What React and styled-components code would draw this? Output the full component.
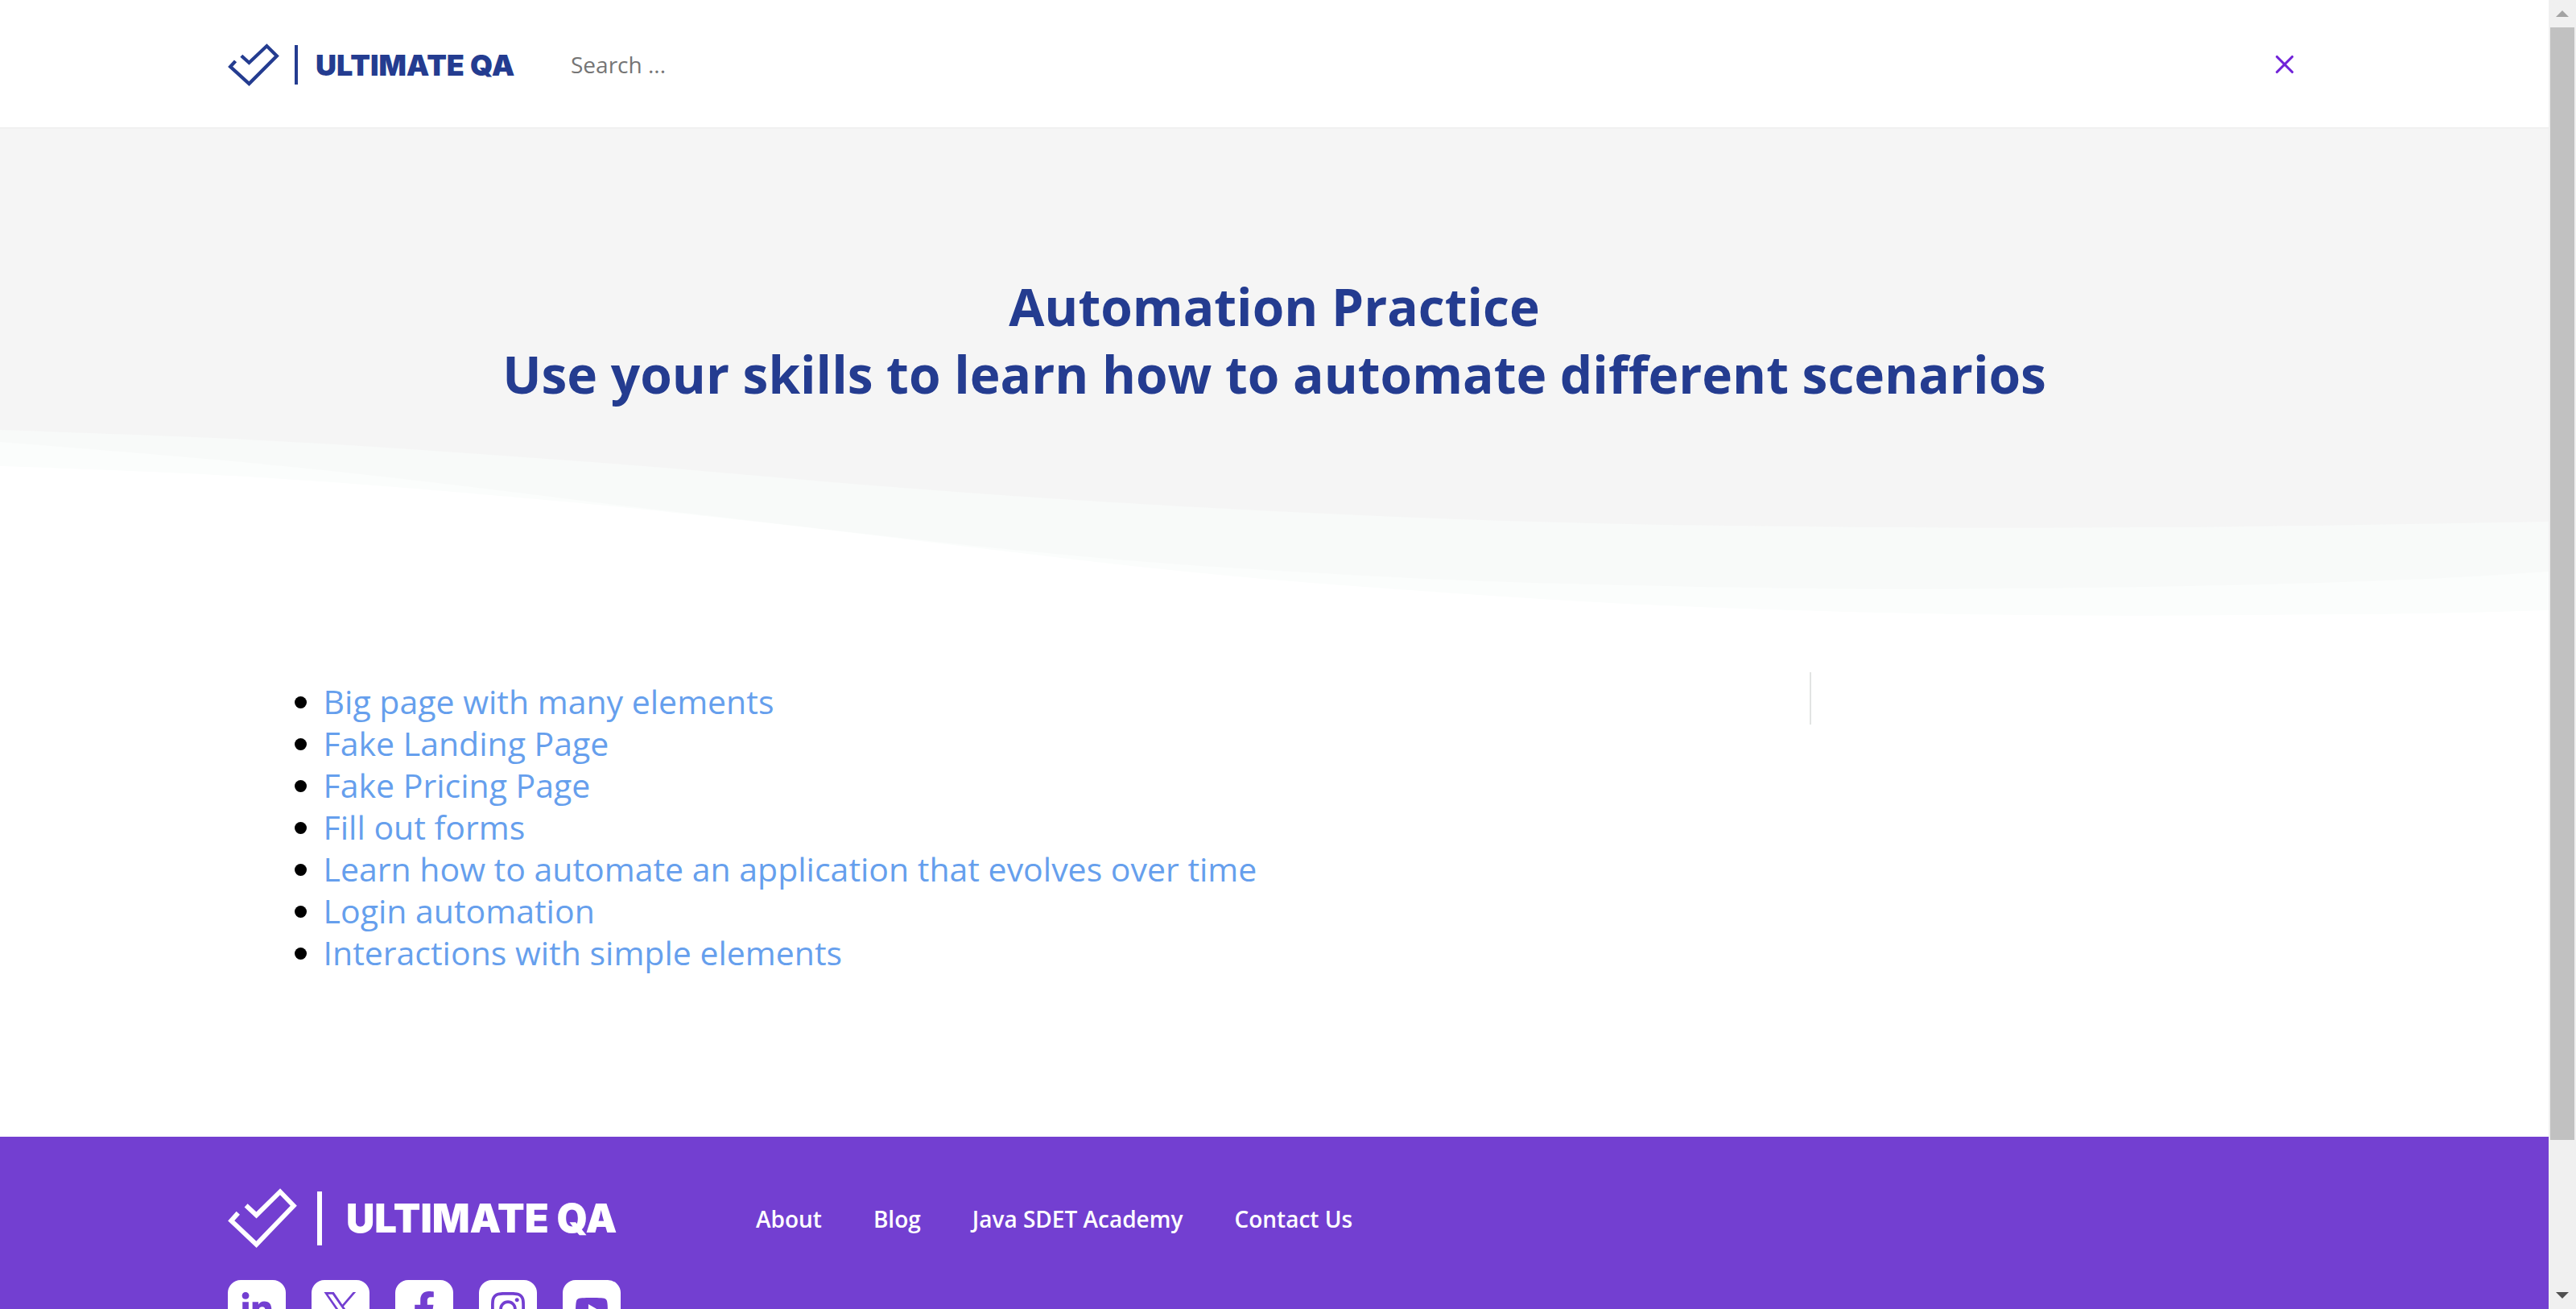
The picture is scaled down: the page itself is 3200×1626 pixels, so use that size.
import React from "react";
import styled, { createGlobalStyle } from "styled-components";
import { X } from "lucide-react";
import { FaLinkedinIn, FaFacebookF, FaInstagram, FaYoutube } from "react-icons/fa";

const navy = "#243c90";
const purple = "#733fd1";

const GlobalStyle = createGlobalStyle`
  *, *::before, *::after { box-sizing: border-box; }
  body {
    margin: 0;
    background: #fff;
    font-family: "Open Sans", "Noto Sans", sans-serif;
  }
`;

const Shell = styled.div`
  display: grid;
  grid-template-columns: minmax(0, 1fr) 34px;
  height: 100vh;
`;

const Page = styled.div`
  overflow-y: auto;
  scrollbar-width: none;
`;

const ScrollTrack = styled.div`
  display: flex;
  flex-direction: column;
  padding: 0 2px;
  background: #f0f0f0;
`;

const ScrollArrow = styled.div`
  display: flex;
  flex: 0 0 34px;
  align-items: center;
  justify-content: center;
`;

const ScrollRail = styled.div`
  flex: 1;
`;

const ScrollThumb = styled.div`
  height: 88.7%;
  background: #c1c1c1;
`;

const Container = styled.div`
  width: 100%;
  max-width: 2600px;
  margin: 0 auto;
`;

const Header = styled.header`
  padding: 54px 0 51px;
  background: #fff;
  border-bottom: 2px solid #f1f1f1;
`;

const HeaderRow = styled(Container)`
  display: flex;
  align-items: center;
  gap: 64px;
`;

const LogoLink = styled.a`
  display: flex;
  flex: none;
  align-items: center;
  width: ${(p) => (p.$large ? 488 : 362)}px;
  height: ${(p) => (p.$large ? 74 : 53)}px;
  color: ${(p) => (p.$large ? "#fff" : navy)};
  text-decoration: none;
`;

const LogoMark = styled.svg`
  width: ${(p) => (p.$large ? 86 : 64)}px;
  height: 100%;
`;

const LogoBar = styled.span`
  width: ${(p) => (p.$large ? 6 : 4)}px;
  height: ${(p) => (p.$large ? 67 : 49)}px;
  margin: ${(p) => (p.$large ? "0 30px 0 25px" : "0 22px 0 19px")};
  background: currentColor;
`;

const LogoText = styled.span`
  font-family: Inter, Lato, sans-serif;
  font-size: ${(p) => (p.$large ? 49 : 36)}px;
  font-weight: 900;
  line-height: 1;
  white-space: nowrap;
`;

const SearchForm = styled.form`
  display: flex;
  flex: 1;
  align-items: center;
  height: 53px;
  padding-right: 26px;
`;

const SearchInput = styled.input`
  flex: 1;
  min-width: 0;
  padding: 0 0 2px;
  border: 0;
  outline: 0;
  background: transparent;
  color: #333;
  font: 400 28px/38px "Open Sans", "Noto Sans", sans-serif;

  &::placeholder {
    color: #757575;
    opacity: 1;
  }
`;

const CloseButton = styled.button`
  display: flex;
  padding: 0 0 2px;
  border: 0;
  background: none;
  color: #7022d8;
  cursor: pointer;
`;

const Hero = styled.section`
  padding-top: 179px;
  background: #f5f5f5;
`;

const HeroTitle = styled.h1`
  margin: 0 0 27px;
  color: ${navy};
  font-size: 64px;
  font-weight: 700;
  line-height: 84px;
  text-align: center;
`;

const HeroLine = styled.span`
  display: block;
`;

const Waves = styled.svg`
  display: block;
  width: 100%;
  height: 236px;
`;

const Main = styled.main`
  display: grid;
  grid-template-columns: minmax(0, 1fr) 601px;
  width: 80%;
  margin: 0 auto;
  padding: 65px 0 203px;
`;

const LinkList = styled.ul`
  margin: 0;
  padding: 10px 0 0 85px;
  color: #000;
  font-size: 41px;
  font-weight: 500;
  line-height: 52px;
`;

const ListLink = styled.a`
  color: #669fed;
  text-decoration: none;
`;

const Sidebar = styled.aside`
  height: 65px;
  border-left: 2px solid #e2e4e3;
`;

const Footer = styled.footer`
  padding: 64px 0 171px;
  background: ${purple};
`;

const FooterRow = styled(Container)`
  display: flex;
  gap: 168px;
`;

const Brand = styled.div`
  display: flex;
  flex-direction: column;
  gap: 40px;
  width: 488px;
`;

const Socials = styled.div`
  display: flex;
  gap: 32px;
`;

const SocialLink = styled.a`
  display: flex;
  align-items: center;
  justify-content: center;
  width: 72px;
  height: 72px;
  border-radius: 16px;
  background: #fff;
  color: ${purple};
`;

const FooterNav = styled.nav`
  display: flex;
  align-items: center;
  gap: 64px;
  height: 76px;
`;

const FooterLink = styled.a`
  color: #fff;
  font-size: 28px;
  font-weight: 600;
  line-height: 38px;
  text-decoration: none;
  white-space: nowrap;
`;

const links = [
  "Big page with many elements",
  "Fake Landing Page",
  "Fake Pricing Page",
  "Fill out forms",
  "Learn how to automate an application that evolves over time",
  "Login automation",
  "Interactions with simple elements",
];

const footerLinks = ["About", "Blog", "Java SDET Academy", "Contact Us"];

function XLogo({ size }) {
  return (
    <svg width={size} height={size} viewBox="0 0 1200 1227" fill="currentColor" aria-hidden="true">
      <path d="M714.163 519.284L1160.89 0H1055.03L667.137 450.887L357.328 0H0L468.492 681.821L0 1226.37H105.866L515.491 750.218L842.672 1226.37H1200L714.137 519.284H714.163ZM569.165 687.828L521.697 619.934L144.011 79.6944H306.615L611.412 515.685L658.88 583.579L1055.08 1150.3H892.476L569.165 687.854V687.828Z" />
    </svg>
  );
}

const socials = [
  { label: "LinkedIn", Icon: FaLinkedinIn, size: 42 },
  { label: "X", Icon: XLogo, size: 42 },
  { label: "Facebook", Icon: FaFacebookF, size: 44 },
  { label: "Instagram", Icon: FaInstagram, size: 48 },
  { label: "YouTube", Icon: FaYoutube, size: 42 },
];

const waves = [
  {
    fill: "#f8faf9",
    points: [[0, 0], [204, 7], [408, 17], [612, 31], [816, 46], [1020, 64], [1224, 80], [1429, 93], [1600, 102], [1804, 111], [2008, 117], [2212, 120], [2518, 122], [2824, 120], [3166, 114]],
  },
  {
    fill: "#fbfdfc",
    points: [[0, 15], [204, 31], [408, 50], [612, 74], [755, 92], [867, 105], [1020, 123], [1224, 146], [1429, 165], [1600, 176], [1804, 187], [2008, 193], [2212, 197], [2396, 198], [2620, 196], [2824, 192], [3029, 185], [3166, 176]],
  },
  {
    fill: "#ffffff",
    points: [[0, 45], [204, 52], [408, 64], [612, 81], [765, 95], [867, 106], [1020, 123], [1224, 148], [1429, 172], [1600, 188], [1804, 203], [2008, 216], [2212, 224], [2416, 229], [2620, 231], [2824, 230], [3029, 228], [3166, 224]],
  },
];

// Smooth curve through the midpoints, closed along the bottom edge.
function wavePath(points) {
  let d = `M0 236L${points[0].join(" ")}`;
  for (let i = 1; i < points.length - 1; i += 1) {
    const [x, y] = points[i];
    const [nx, ny] = points[i + 1];
    d += `Q${x} ${y} ${(x + nx) / 2} ${(y + ny) / 2}`;
  }
  return `${d}L${points[points.length - 1].join(" ")}V236Z`;
}

function Logo({ large = false }) {
  return (
    <LogoLink href="#" $large={large} aria-label="Ultimate QA">
      <LogoMark $large={large} viewBox="0 0 86 74" preserveAspectRatio="none" fill="none" stroke="currentColor" strokeWidth="5.8" aria-hidden="true">
        <path d="M12.8 30.7L4.2 40.3L35.5 69.8L81.8 21.7L65 4.3L35.5 33.4L22.6 21.3" />
      </LogoMark>
      <LogoBar $large={large} />
      <LogoText $large={large}>ULTIMATE QA</LogoText>
    </LogoLink>
  );
}

function Scrollbar() {
  return (
    <ScrollTrack aria-hidden="true">
      <ScrollArrow>
        <svg width="16" height="8"><path d="M0 8L8 0L16 8Z" fill="#a3a3a3" /></svg>
      </ScrollArrow>
      <ScrollRail>
        <ScrollThumb />
      </ScrollRail>
      <ScrollArrow>
        <svg width="16" height="8"><path d="M0 0L8 8L16 0Z" fill="#505050" /></svg>
      </ScrollArrow>
    </ScrollTrack>
  );
}

export default function App() {
  return (
    <Shell>
      <GlobalStyle />
      <Page>
        <Header>
          <HeaderRow>
            <Logo />
            <SearchForm role="search" onSubmit={(e) => e.preventDefault()}>
              <SearchInput type="text" placeholder="Search ..." aria-label="Search for:" />
              <CloseButton type="button" aria-label="Close search">
                <X size={38} strokeWidth={2} />
              </CloseButton>
            </SearchForm>
          </HeaderRow>
        </Header>
        <Hero>
          <HeroTitle>
            <HeroLine>Automation Practice</HeroLine>
            <HeroLine>Use your skills to learn how to automate different scenarios</HeroLine>
          </HeroTitle>
          <Waves viewBox="0 0 3166 236" preserveAspectRatio="none" aria-hidden="true">
            {waves.map((wave) => (
              <path key={wave.fill} d={wavePath(wave.points)} fill={wave.fill} />
            ))}
          </Waves>
        </Hero>
        <Main>
          <LinkList>
            {links.map((text) => (
              <li key={text}>
                <ListLink href="#">{text}</ListLink>
              </li>
            ))}
          </LinkList>
          <Sidebar />
        </Main>
        <Footer>
          <FooterRow>
            <Brand>
              <Logo large />
              <Socials>
                {socials.map(({ label, Icon, size }) => (
                  <SocialLink key={label} href="#" aria-label={label}>
                    <Icon size={size} />
                  </SocialLink>
                ))}
              </Socials>
            </Brand>
            <FooterNav aria-label="Footer">
              {footerLinks.map((text) => (
                <FooterLink key={text} href="#">{text}</FooterLink>
              ))}
            </FooterNav>
          </FooterRow>
        </Footer>
      </Page>
      <Scrollbar />
    </Shell>
  );
}
